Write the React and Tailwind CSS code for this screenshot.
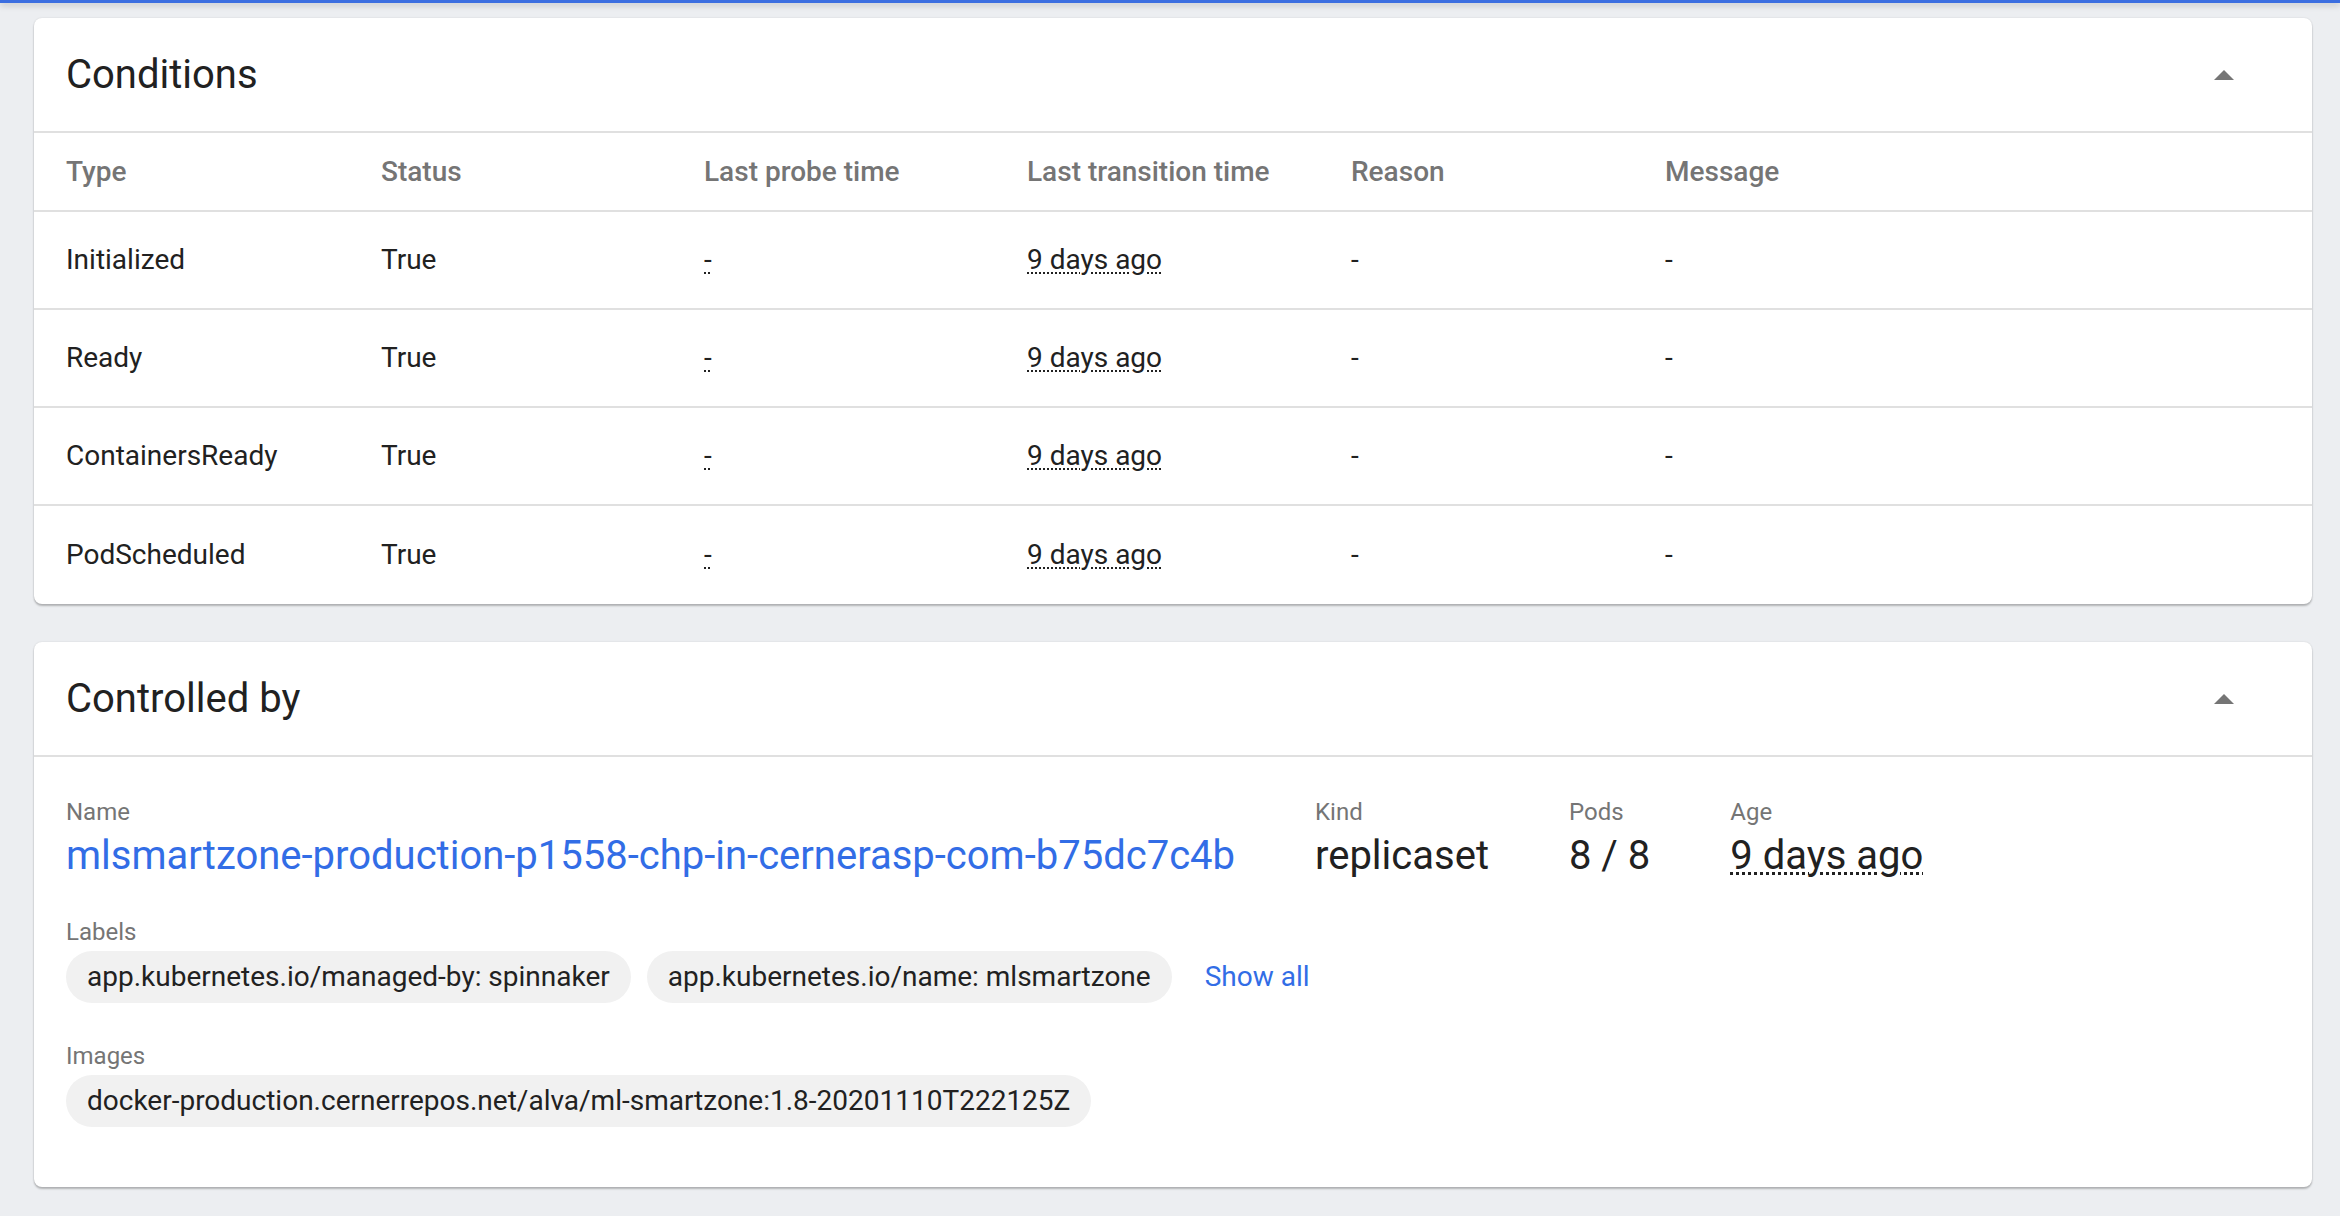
import React from 'react';

const conditions = [
  { type: 'Initialized', status: 'True' },
  { type: 'Ready', status: 'True' },
  { type: 'ContainersReady', status: 'True' },
  { type: 'PodScheduled', status: 'True' },
];

const cols = 'grid grid-cols-[315px_323px_323px_324px_314px_1fr] px-[32px]';

function ArrowUp() {
  return (
    <svg width="20" height="10" viewBox="0 0 20 10" className="block">
      <path d="M0 10 L10 0 L20 10 Z" fill="#757575" />
    </svg>
  );
}

function Card({ title, children }) {
  return (
    <div className="bg-white rounded-[8px] shadow-[0_2px_2px_rgba(0,0,0,0.24),0_0_2px_rgba(0,0,0,0.12)] overflow-hidden">
      <div className="h-[115px] flex items-center justify-between pl-[32px] pr-[78px] border-b-2 border-[#e0e0e0]">
        <span className="text-[40px] text-[#212121]">{title}</span>
        <ArrowUp />
      </div>
      {children}
    </div>
  );
}

function Dotted({ children, className = '' }) {
  return (
    <span className={`underline decoration-dotted decoration-2 underline-offset-[3px] ${className}`}>
      {children}
    </span>
  );
}

function Chip({ children }) {
  return (
    <span className="h-[52px] inline-flex items-center px-[21px] rounded-full bg-[#f1f1f1] text-[28px] text-[#212121] whitespace-nowrap">
      {children}
    </span>
  );
}

function Field({ label, children }) {
  return (
    <div className="flex flex-col">
      <span className="text-[24px] leading-[32px] text-[#757575]">{label}</span>
      {children}
    </div>
  );
}

export default function App() {
  return (
    <div className="min-h-[1216px] bg-[#eceef1] font-['Roboto',sans-serif]">
      <div className="h-[3px] bg-[#3b6ee0] shadow-[0_2px_6px_rgba(0,0,0,0.25)]" />
      <div className="pt-[15px] pl-[34px] pr-[28px] flex flex-col gap-[38px]">
        <Card title="Conditions">
          <div className={`${cols} h-[79px] items-center border-b-2 border-[#e0e0e0] text-[28px] font-medium text-[#757575]`}>
            <span>Type</span>
            <span>Status</span>
            <span>Last probe time</span>
            <span>Last transition time</span>
            <span>Reason</span>
            <span>Message</span>
          </div>
          {conditions.map((c, i) => (
            <div
              key={c.type}
              className={`${cols} h-[98px] items-center text-[28px] text-[#212121] ${i < conditions.length - 1 ? 'border-b-2 border-[#e0e0e0]' : ''}`}
            >
              <span>{c.type}</span>
              <span>{c.status}</span>
              <span><Dotted>-</Dotted></span>
              <span><Dotted>9 days ago</Dotted></span>
              <span>-</span>
              <span>-</span>
            </div>
          ))}
        </Card>

        <Card title="Controlled by">
          <div className="pt-[39px] pb-[60px] px-[32px] flex flex-col">
            <div className="flex gap-[80px]">
              <Field label="Name">
                <a className="text-[40px] leading-[55px] text-[#326de6]">
                  mlsmartzone-production-p1558-chp-in-cernerasp-com-b75dc7c4b
                </a>
              </Field>
              <Field label="Kind">
                <span className="text-[40px] leading-[55px] text-[#212121]">replicaset</span>
              </Field>
              <Field label="Pods">
                <span className="text-[40px] leading-[55px] text-[#212121]">8 / 8</span>
              </Field>
              <Field label="Age">
                <span className="text-[40px] leading-[55px] text-[#212121]">
                  <Dotted className="decoration-[3px]">9 days ago</Dotted>
                </span>
              </Field>
            </div>

            <div className="mt-[33px]">
              <Field label="Labels">
                <div className="mt-[3px] flex items-center gap-[16px]">
                  <Chip>app.kubernetes.io/managed-by: spinnaker</Chip>
                  <Chip>app.kubernetes.io/name: mlsmartzone</Chip>
                  <a className="ml-[17px] text-[28px] text-[#326de6]">Show all</a>
                </div>
              </Field>
            </div>

            <div className="mt-[37px]">
              <Field label="Images">
                <div className="mt-[3px] flex">
                  <Chip>docker-production.cernerrepos.net/alva/ml-smartzone:1.8-20201110T222125Z</Chip>
                </div>
              </Field>
            </div>
          </div>
        </Card>
      </div>
    </div>
  );
}
